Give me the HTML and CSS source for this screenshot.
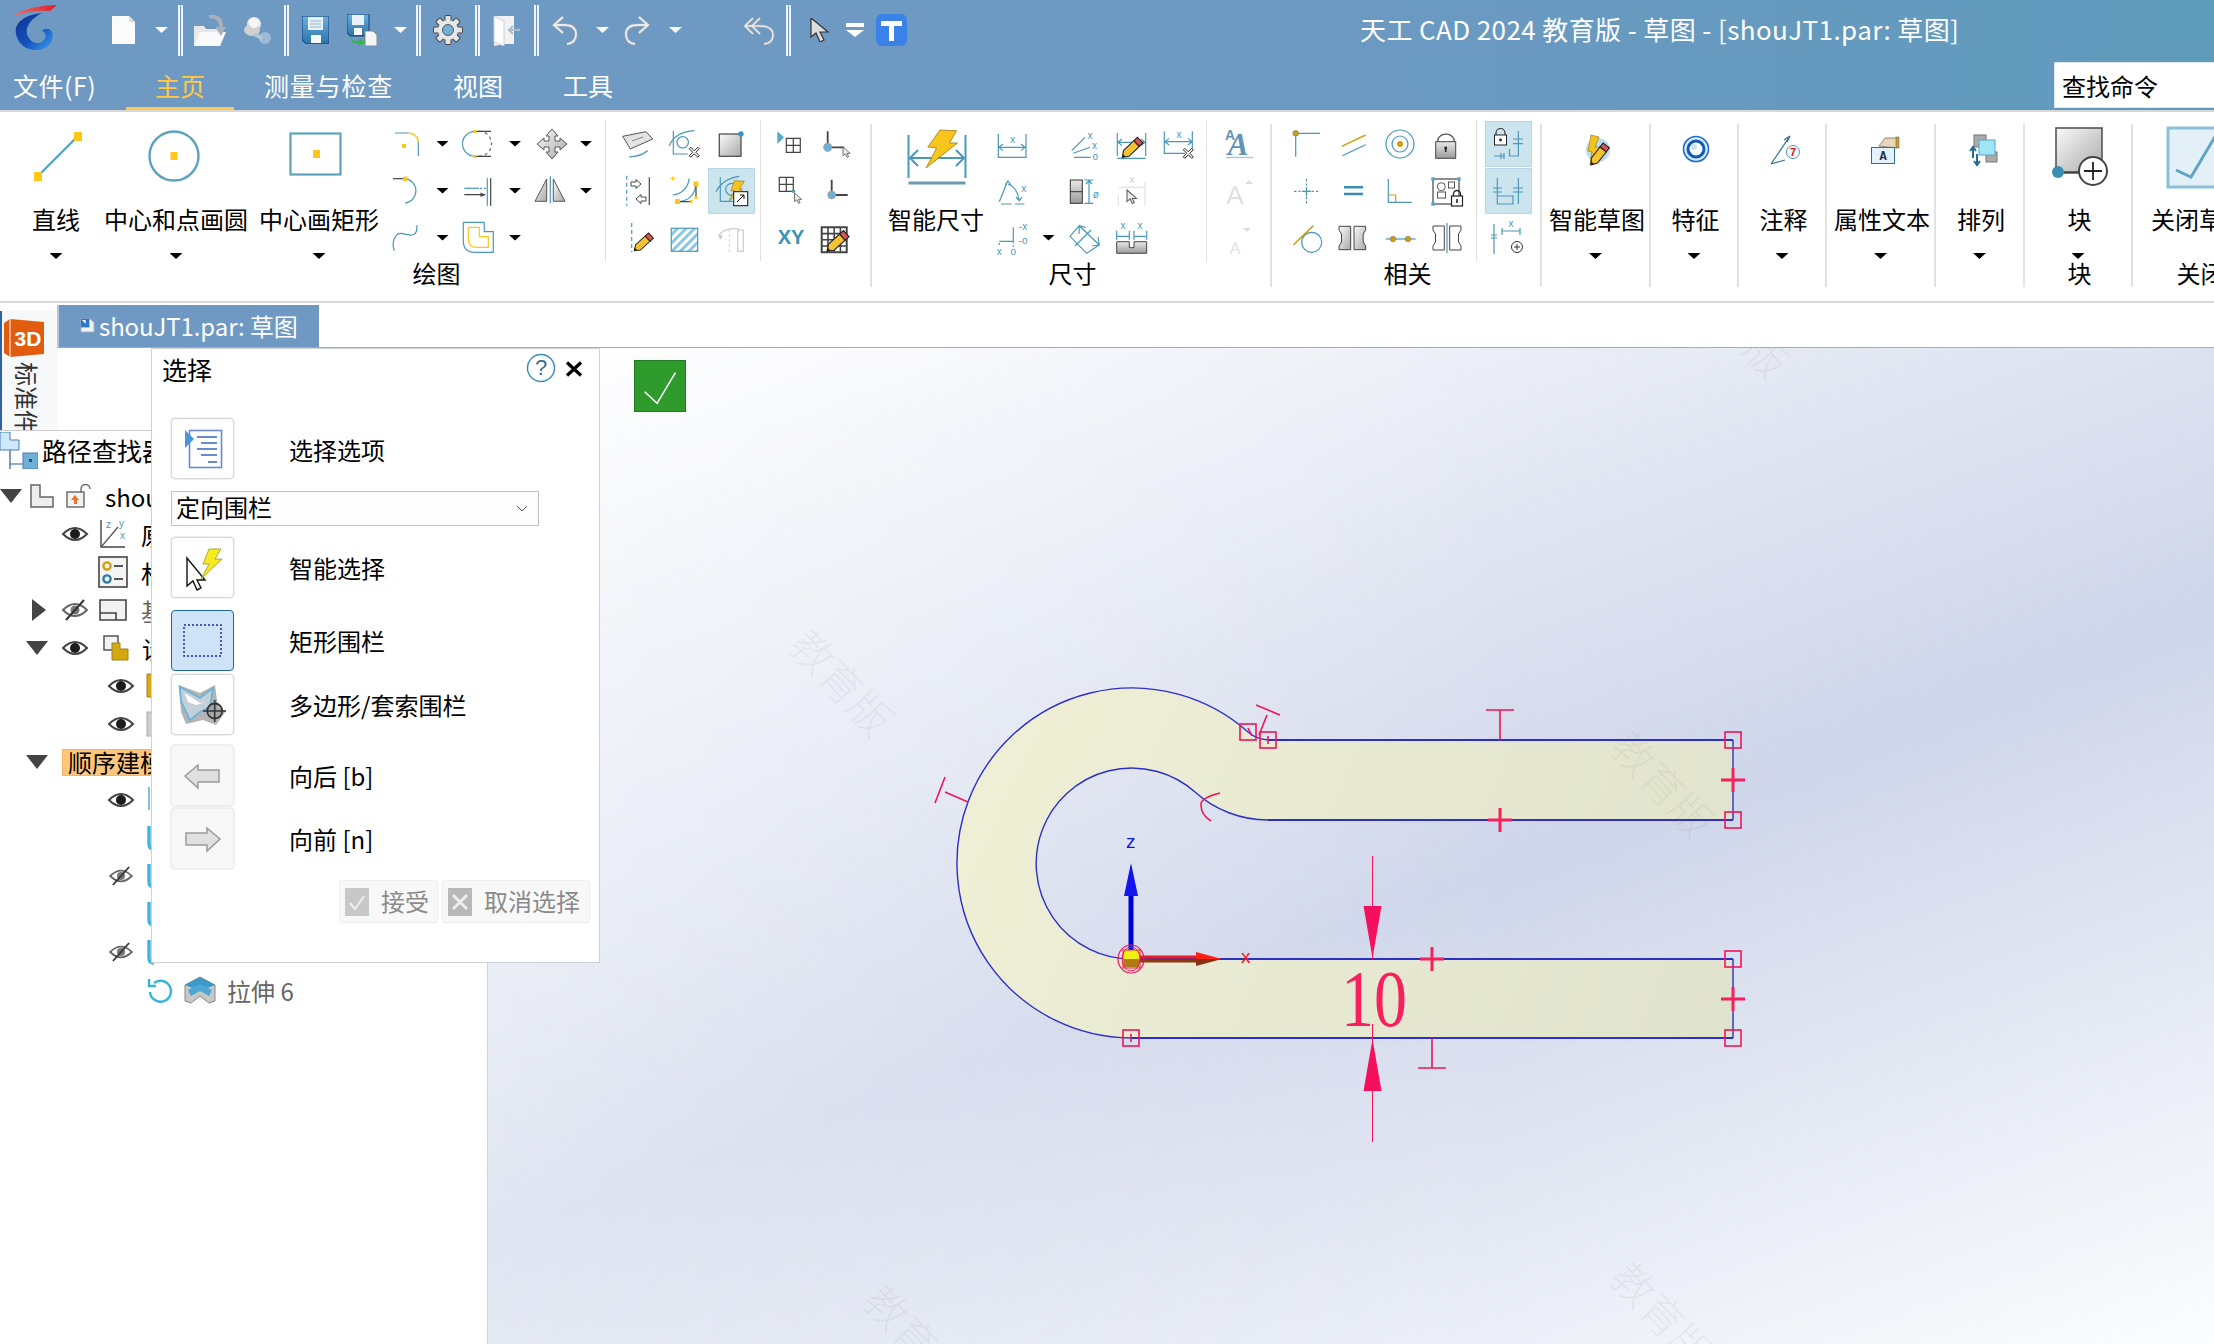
FILE: index.html
```html
<!DOCTYPE html>
<html lang="zh-CN">
<head>
<meta charset="utf-8">
<title>天工 CAD 2024 教育版 - 草图</title>
<link rel="stylesheet" href="styles.css">
</head>
<body>
<svg class="defs" width="0" height="0" aria-hidden="true">
<defs>
<linearGradient id="gy" x1="0" y1="0" x2="1" y2="1"><stop offset="0" stop-color="#fafafa"/><stop offset="1" stop-color="#a9a9a9"/></linearGradient>
<linearGradient id="gyv" x1="0" y1="0" x2="0" y2="1"><stop offset="0" stop-color="#e8e8e8"/><stop offset="1" stop-color="#9b9b9b"/></linearGradient>
<linearGradient id="redsw" x1="0" y1="0" x2="1" y2="0"><stop offset="0" stop-color="#f07070"/><stop offset="1" stop-color="#d81f26"/></linearGradient>
<linearGradient id="bluesw" x1="0" y1="0" x2="1" y2="1"><stop offset="0" stop-color="#0e2f8f"/><stop offset=".55" stop-color="#1550bd"/><stop offset="1" stop-color="#3aa0ee"/></linearGradient>
<linearGradient id="floppy" x1="0" y1="0" x2="0" y2="1"><stop offset="0" stop-color="#6cb0dc"/><stop offset="1" stop-color="#2c73a8"/></linearGradient>
<linearGradient id="sh" gradientUnits="userSpaceOnUse" x1="950" y1="690" x2="1740" y2="1040"><stop offset="0" stop-color="#f0f0d6"/><stop offset="1" stop-color="#dfe2cd"/></linearGradient>
<pattern id="hatch" width="6" height="6" patternUnits="userSpaceOnUse" patternTransform="rotate(45)"><rect width="6" height="6" fill="#fff"/><rect width="3" height="6" fill="#8cc8e4"/></pattern>
<g id="pencil"><polygon points="0,0 5,-3.6 18,-3.6 18,3.6 5,3.6" fill="#f4c430" stroke="#222" stroke-width="1"/><rect x="18" y="-3.6" width="4.5" height="7.2" fill="#e05050" stroke="#222" stroke-width="1"/><polygon points="0,0 2.5,-1.8 2.5,1.8" fill="#222"/></g>
<path id="cur" d="M0 0V11L3 8.5L5 13L7 12L5 8H9Z" fill="#eee" stroke="#555" stroke-width="1"/>
<path id="xm" d="M-5-3.5L-3.5-5L0-1.5L3.5-5L5-3.5L1.5 0L5 3.5L3.5 5L0 1.5L-3.5 5L-5 3.5L-1.5 0Z" fill="#fff" stroke="#222" stroke-width="1"/>
<g id="eye"><path d="M1 9Q13-3 25 9Q13 21 1 9Z" fill="#fff" stroke="#444" stroke-width="2"/><circle cx="13" cy="9" r="5" fill="#1c1c1c"/></g>
<g id="eyeoff"><path d="M1 9Q13-3 25 9Q13 21 1 9Z" fill="#fff" stroke="#666" stroke-width="2"/><circle cx="13" cy="9" r="4.5" fill="#777"/><path d="M22-1L4 19" stroke="#333" stroke-width="2"/></g>
<g id="cyan"><path d="M3 1V19Q3 24 8 24" fill="none" stroke="#3fb4dc" stroke-width="3.4"/></g>
<g id="cyanthin"><path d="M3 0V23" fill="none" stroke="#7fc4de" stroke-width="2"/></g>
</defs>
</svg>

<div class="app">
  <header class="titlebar">
    <div class="qat">
      <svg class="q q-logo" viewBox="0 0 47 47"><path d="M2 12Q20 1 47 1L40 7Q20 6 5 12Z" fill="url(#redsw)"/><path d="M32 9C14 11 4 19 6 30C8 41 18 47 28 46C38 45 45 37 42 28C40 24 35 24 32 27C36 28 37 33 34 36C30 41 22 40 19 34C14 27 17 17 32 9Z" fill="url(#bluesw)"/></svg>
      <svg class="q q-new" viewBox="0 0 23 28"><path d="M0 0H17L23 6V28H0Z" fill="#fbfbfb"/><path d="M17 0V6H23Z" fill="#ddd"/></svg>
      <span class="dd w q-dd1"></span>
      <span class="qsep q-s1"></span>
      <svg class="q q-open" viewBox="0 0 32 31"><path d="M0 11H10L12 14H26V30H0Z" fill="#e8e8e8"/><path d="M6 17H32L26 31H0Z" fill="#fafafa"/><path d="M15 1Q26 1 27 10V17" fill="none" stroke="#a8b0b8" stroke-width="4"/><path d="M21 12H32L27 21Z" fill="#a8b0b8"/></svg>
      <svg class="q q-pin" viewBox="0 0 30 29"><ellipse cx="12" cy="8" rx="7" ry="7" fill="#e6e6e6"/><ellipse cx="10" cy="14" rx="8" ry="6" fill="#d0d0d0"/><ellipse cx="12" cy="7" rx="5" ry="5" fill="#f6f6f6"/><circle cx="23" cy="22" r="6" fill="#9cb9d6"/><path d="M12 18L20 22" stroke="#b6c8da" stroke-width="4"/></svg>
      <span class="qsep q-s2"></span>
      <svg class="q q-save" viewBox="0 0 27 28"><path d="M0 0H27V28H4L0 24Z" fill="url(#floppy)" stroke="#123d80" stroke-width="1"/><rect x="6" y="1" width="15" height="13" fill="#e8f1f8"/><path d="M8 5H19M8 8H19M8 11H19" stroke="#8fb3cf" stroke-width="1"/><rect x="9" y="19" width="10" height="8" fill="#f4f8fb"/></svg>
      <svg class="q q-saveas" viewBox="0 0 30 32"><path d="M0 0H22V22H3L0 19Z" fill="url(#floppy)" stroke="#123d80" stroke-width="1"/><rect x="5" y="1" width="12" height="10" fill="#e8f1f8"/><rect x="7" y="14" width="8" height="7" fill="#f4f8fb"/><path d="M18 17H26L30 21V32H18Z" fill="#f5f5f5" stroke="#888" stroke-width="1"/><path d="M3 21Q4 28 12 27V24L19 28L12 32V30Q3 30 3 21Z" fill="#35b54a"/></svg>
      <span class="dd w q-dd2"></span>
      <span class="qsep q-s3"></span>
      <svg class="q q-gear" viewBox="0 0 30 30"><g fill="#e4e4e4" stroke="#444" stroke-width="1"><rect x="12" y="0.5" width="6" height="29" rx="1"/><rect x="12" y="0.5" width="6" height="29" rx="1" transform="rotate(45 15 15)"/><rect x="12" y="0.5" width="6" height="29" rx="1" transform="rotate(90 15 15)"/><rect x="12" y="0.5" width="6" height="29" rx="1" transform="rotate(135 15 15)"/></g><circle cx="15" cy="15" r="10" fill="#e8e8e8"/><circle cx="15" cy="15" r="5.5" fill="#72b0d4" stroke="#556" stroke-width="1"/></svg>
      <span class="qsep q-s4"></span>
      <svg class="q q-door" viewBox="0 0 28 32"><path d="M2 2H22V30H12L2 32Z" fill="#f2f2f2"/><path d="M2 2L12 7V32L2 28Z" fill="#fff" stroke="#ccd" stroke-width="1"/><path d="M28 16H17M21 12L17 16L21 20" fill="none" stroke="#a9bccd" stroke-width="2"/></svg>
      <span class="qsep q-s5"></span>
      <svg class="q q-undo" viewBox="0 0 26 29"><path d="M11 1L2 9L11 17M3 9H12Q24 9 24 18Q24 27 15 28" fill="none" stroke="#97a5b3" stroke-width="3.4"/><path d="M11 1L2 9L11 17M3 9H12Q24 9 24 18Q24 27 15 28" fill="none" stroke="#ececec" stroke-width="1.8"/></svg>
      <span class="dd w q-dd3"></span>
      <svg class="q q-redo" viewBox="0 0 26 29"><g transform="matrix(-1 0 0 1 26 0)"><path d="M11 1L2 9L11 17M3 9H12Q24 9 24 18Q24 27 15 28" fill="none" stroke="#97a5b3" stroke-width="3.4"/><path d="M11 1L2 9L11 17M3 9H12Q24 9 24 18Q24 27 15 28" fill="none" stroke="#ececec" stroke-width="1.8"/></g></svg>
      <span class="dd w q-dd4"></span>
      <svg class="q q-undoall" viewBox="0 0 32 30"><g fill="none"><path d="M10 3L2 11L10 19M2 11H16Q30 11 30 20Q30 28 21 29" stroke="#97a5b3" stroke-width="3"/><path d="M17 3L9 11L17 19" stroke="#97a5b3" stroke-width="3"/><path d="M10 3L2 11L10 19M2 11H16Q30 11 30 20Q30 28 21 29" stroke="#ececec" stroke-width="1.5"/><path d="M17 3L9 11L17 19" stroke="#ececec" stroke-width="1.5"/></g></svg>
      <span class="qsep q-s6"></span>
      <svg class="q q-cursor" viewBox="0 0 20 24"><path d="M1 0V19L6 15L10 24L14 22L10 14H18Z" fill="#ddd" stroke="#333" stroke-width="1.2"/></svg>
      <svg class="q q-ddbar" viewBox="0 0 18 14"><rect width="18" height="4" fill="#fff"/><path d="M0 7H18L9 14Z" fill="#fff"/></svg>
      <svg class="q q-t" viewBox="0 0 31 32"><rect width="31" height="32" rx="6" fill="#3b82e8"/><path d="M5 7H26V12H18V27H13V12H5Z" fill="#fff"/></svg>
      <div class="apptitle">天工 CAD 2024 教育版 - 草图 - [shouJT1.par: 草图]</div>
    </div>
    <nav class="tabs">
      <span class="tab t-file">文件(F)</span>
      <span class="tab t-home">主页</span>
      <span class="tab t-meas">测量与检查</span>
      <span class="tab t-view">视图</span>
      <span class="tab t-tool">工具</span>
      <div class="search">查找命令</div>
    </nav>
  </header>

  <section class="ribbon">
    <!-- 绘图 -->
    <div class="grp g-draw">
      <div class="body">
        <div class="big b-line">
          <svg class="bi" viewBox="0 0 100 85"><path d="M32 56L72 16" stroke="#5ba3c4" stroke-width="2.4"/><rect x="28" y="52" width="8" height="9" fill="#ffc61a"/><rect x="68" y="12" width="8" height="9" fill="#ffc61a"/></svg>
          <span class="lbl">直线</span><span class="dd"></span>
        </div>
        <div class="big b-circ">
          <svg class="bi" viewBox="0 0 100 85"><circle cx="48" cy="36" r="24.5" fill="none" stroke="#5ba3bd" stroke-width="2.4"/><rect x="44.5" y="32" width="7" height="8" fill="#ffc61a"/></svg>
          <span class="lbl">中心和点画圆</span><span class="dd"></span>
        </div>
        <div class="big b-rect">
          <svg class="bi" viewBox="0 0 100 85"><rect x="21.5" y="13.5" width="50" height="41" fill="none" stroke="#5ba3bd" stroke-width="2.2"/><rect x="44" y="30" width="7" height="8" fill="#ffc61a"/></svg>
          <span class="lbl">中心画矩形</span><span class="dd"></span>
        </div>
        <div class="sg sg-a">
          <svg class="si" viewBox="0 0 36 36"><path class="ln" d="M7 7H20.7M30.3 16.3V30"/><path d="M20.7 7A9.6 9.3 0 0 1 30.3 16.3" fill="none" stroke="#ffc61a" stroke-width="1.6"/><rect x="14" y="18" width="4" height="4" fill="#ffc61a"/></svg><span class="dd"></span>
          <svg class="si" viewBox="0 0 36 36"><path class="ln" d="M16 5.3A12.5 12.5 0 0 0 16 30.3"/><path d="M20 5.3A12.5 12.5 0 0 1 20 30.3" fill="none" stroke="#777" stroke-width="1.4" stroke-dasharray="3 3"/><path class="dk" d="M17 5.3H32M17 30.3H32"/><rect x="14.5" y="4" width="3" height="3" fill="#ffc61a"/><rect x="14.5" y="29" width="3" height="3" fill="#ffc61a"/></svg><span class="dd"></span>
          <svg class="si" viewBox="0 0 36 36"><path d="M18 3L24 10H21V15H26V12L33 18L26 24V21H21V26H24L18 33L12 26H15V21H10V24L3 18L10 12V15H15V10H12Z" fill="url(#gy)" stroke="#555" stroke-width="1"/></svg><span class="dd"></span>

          <svg class="si" viewBox="0 0 36 36"><path class="dk" d="M5 5.7H16"/><path class="ln" d="M17 5.7A12 12.2 0 0 1 17 30"/><rect x="15" y="3.5" width="4.5" height="4.5" fill="#ffc61a"/></svg><span class="dd"></span>
          <svg class="si" viewBox="0 0 36 36"><path class="ln" d="M28.3 5.3V32.7"/><path class="dk" d="M31.7 5.3V32.7M5.3 21.7H26"/><path class="ln" d="M5.3 15.3H20" /><path class="ln" d="M21 15.3H27" stroke-dasharray="2 2"/><path d="M26.7 21.7L21.5 19.5V24Z" fill="#444"/></svg><span class="dd"></span>
          <svg class="si" viewBox="0 0 36 36"><path d="M12.7 6L1 28.3H12.7Z" fill="url(#gy)" stroke="#555" stroke-width="1"/><path d="M19.3 6L31 28.3H19.3Z" fill="url(#gy)" stroke="#555" stroke-width="1"/><path class="ln" d="M16.3 3.3V30"/></svg><span class="dd"></span>

          <svg class="si" viewBox="0 0 36 36"><path class="ln" d="M6.3 30.7C3 22 7.3 12 14.7 13.7C23 16 29.7 17 29 5"/></svg><span class="dd"></span>
          <svg class="si" viewBox="0 0 36 36"><path class="ln" d="M4.3 2.3H25.3V11.7H34.3V32.3H16Q4.3 32.3 4.3 20.7Z"/><path d="M9.3 7.3H20.3V16.7H29.3V27.3H17.7Q9.3 27.3 9.3 19Z" fill="none" stroke="#ffc61a" stroke-width="1.2"/></svg><span class="dd"></span>
        </div>
        <div class="sg sg-b">
          <svg class="si" viewBox="0 0 36 36"><path d="M2.7 10.3L26 5.7L32.7 13L10.3 23Z" fill="#e3e3e3" stroke="#555" stroke-width="1"/><path d="M12 15L23 11" stroke="#888" stroke-width="1"/><path d="M9.3 30.7Q20 31 27.7 24.7" fill="none" stroke="#5ba3c4" stroke-width="1.6"/></svg>
          <svg class="si" viewBox="0 0 36 36"><path class="ln" d="M6.3 4.7V28H20.7M2.3 19.7Q8 6 27.3 4.7"/><circle class="ln" cx="15.7" cy="16.3" r="5.7"/><use href="#xm" transform="translate(27.3 26.3)"/></svg>
          <svg class="si" viewBox="0 0 36 36"><rect x="5.3" y="8" width="21.7" height="22.3" fill="url(#gy)" stroke="#444" stroke-width="1.2"/><circle cx="27" cy="8" r="2.7" fill="#3a93c4"/></svg>

          <svg class="si" viewBox="0 0 36 36"><path class="ln" d="M6.7 2.7V32.7" stroke-dasharray="4 3"/><path class="dk" d="M29.3 4.3V32"/><path d="M11 9H16V6.5L21 11L16 15.5V13H11Z" fill="#fff" stroke="#444" stroke-width="1"/><path d="M26 24H21V21.5L16 26L21 30.5V28H26Z" fill="#fff" stroke="#444" stroke-width="1"/></svg>
          <svg class="si" viewBox="0 0 36 36"><path d="M3.5 5.5H8M5.7 3.3V7.7" stroke="#ffc61a" stroke-width="1"/><path class="ln" d="M5.7 22Q20 20 22.3 5.3M10.7 28.7Q27 28 29 11"/><path class="dk" d="M10.7 28.7H24.5M29 11V24"/><rect x="8" y="26" width="5" height="5" fill="#ffc61a"/><rect x="26.5" y="8.5" width="5" height="5" fill="#ffc61a"/><rect x="22.5" y="27" width="3" height="3" fill="#ffc61a"/><rect x="27.5" y="23" width="3" height="3" fill="#ffc61a"/></svg>
          <div class="act"><svg class="si" viewBox="0 0 36 36"><path class="ln" d="M6.3 4.3V28.3H18.7M2 18.7Q8 6 25.3 3.3"/><circle class="ln" cx="17.7" cy="16.3" r="6"/><polygon points="20.3,7.7 30.3,8.3 25.3,16 28.7,16 15.3,27.7 20.3,17.7 17,17.7" fill="#f6c21c" stroke="#8a6d00" stroke-width=".6"/><rect x="19.7" y="18.7" width="14" height="14" fill="#fff" stroke="#111" stroke-width="1"/><path d="M23 29L30 22M26 22H30V26" fill="none" stroke="#111" stroke-width="1"/></svg></div>

          <svg class="si" viewBox="0 0 36 36"><path class="ln" d="M11.7 3V32.3" stroke-dasharray="4 3"/><use href="#pencil" transform="translate(14.3 30.7) rotate(-42)"/></svg>
          <svg class="si" viewBox="0 0 36 36"><rect x="4.3" y="8.3" width="26.4" height="23" fill="url(#hatch)" stroke="#4b97b8" stroke-width="1.2"/></svg>
          <svg class="si" viewBox="0 0 36 36"><path d="M15.3 9V33" stroke="#ddd" stroke-width="1.2" stroke-dasharray="3 2"/><rect x="23.7" y="10" width="5.6" height="21.3" fill="none" stroke="#ccc" stroke-width="1.2"/><path d="M4.7 15.7Q10 7 25.3 9" fill="none" stroke="#ccc" stroke-width="1.2"/><path d="M4 14L9 16L6 20Z" fill="#ccc"/></svg>
        </div>
        <div class="sg sg-c">
          <svg class="si" viewBox="0 0 36 36"><path d="M6.3 5.3V18L13 11.3Z" fill="#58a6c8"/><path class="dk" d="M15.3 12.3H29.3V26.3H15.3ZM22.3 12.3V26.3M15.3 19.3H29.3"/></svg>
          <svg class="si" viewBox="0 0 36 36"><path d="M9.7 5.3V21.3H26.3" fill="none" stroke="#444" stroke-width="1.8"/><circle cx="9.7" cy="21.3" r="4.2" fill="#6cb0d6" stroke="#b98" stroke-width=".6"/><use href="#cur" transform="translate(25 21) scale(.8)"/></svg>

          <svg class="si" viewBox="0 0 36 36"><path class="dk" d="M8.3 4.3H22.3V18.3H8.3ZM15.3 4.3V18.3M8.3 11.3H22.3"/><circle cx="22.3" cy="18.3" r="1.8" fill="#4b97b8"/><use href="#cur" transform="translate(23.5 20) scale(.8)"/></svg>
          <svg class="si" viewBox="0 0 36 36"><path d="M13.7 6.7V22H29.7" fill="none" stroke="#444" stroke-width="1.8"/><circle cx="13.7" cy="22" r="4" fill="#6cb0d6" stroke="#b98" stroke-width=".6"/></svg>

          <svg class="si" viewBox="0 0 36 36"><text class="xy" x="20" y="24" text-anchor="middle">XY</text></svg>
          <svg class="si" viewBox="0 0 36 36"><path d="M3.7 7.3H28.7V32.3H3.7Z" fill="#fff" stroke="#444" stroke-width="2"/><path d="M10 7.3V32.3M16.2 7.3V32.3M22.4 7.3V32.3M3.7 13.6H28.7M3.7 19.8H28.7M3.7 26H28.7" stroke="#444" stroke-width="1.6"/><use href="#pencil" transform="translate(9 31) rotate(-42) scale(1.15)"/></svg>
        </div>
      </div>
      <div class="glabel">绘图</div>
    </div>

    <!-- 尺寸 -->
    <div class="grp g-dim">
      <div class="body">
        <div class="big b-smart">
          <svg class="bi" viewBox="0 0 100 85"><path d="M22.5 15V58M79.5 15V58" stroke="#4b97b8" stroke-width="2"/><path d="M22.5 63H79.5" stroke="#6d9cb0" stroke-width="3"/><path d="M24 38H78M32 30L24 38L32 46M70 30L78 38L70 46" fill="none" stroke="#4b97b8" stroke-width="2"/><polygon points="54,10 70.6,10.7 63.5,23 71.5,23 40,48 50.6,28 41.8,27" fill="#f8c51c" stroke="#9a7a10" stroke-width=".8"/></svg>
          <span class="lbl">智能尺寸</span>
        </div>
        <div class="sg sg-d">
          <svg class="si" viewBox="0 0 36 36"><path class="ln" d="M4.3 8V31.3H32V8M5 21.3H31M9 18L5 21.3L9 24.6M27 18L31 21.3L27 24.6"/><text class="lb" x="18.7" y="17" text-anchor="middle">x</text></svg><span></span>
          <svg class="si" viewBox="0 0 36 36"><path class="ln" d="M4.7 24.7L18 11.3M6.3 27.3L23 21.3M7 31.3H23.7"/><text class="lb" x="23" y="13" text-anchor="middle">x</text><text class="lb" x="27.5" y="23" text-anchor="middle">x</text><text class="lb" x="28.3" y="34" text-anchor="middle">o</text></svg>
          <svg class="si" viewBox="0 0 36 36"><path class="ln" d="M3.3 7V30M31.7 7V30M3.3 32.3H31.7M4 16.3H31M8 13L4 16.3L8 19.6M27 13L31 16.3L27 19.6"/><use href="#pencil" transform="translate(8.3 31.3) rotate(-44) scale(1.1)"/></svg>
          <svg class="si" viewBox="0 0 36 36"><path class="ln" d="M3.3 5.3V27.3H24M31.3 5.3V25M4 15.7H31M8 12.4L4 15.7L8 19M27 12.4L31 15.7L27 19"/><text class="lb" x="18" y="12" text-anchor="middle">x</text><use href="#xm" transform="translate(27.3 27.3)"/></svg>

          <svg class="si" viewBox="0 0 36 36"><path class="ln" d="M5.3 28.7L13.7 7.7M7 31H17.7M21 31H30.3M14 11Q23 14 25.3 27.7M22 24L25.3 27.7L28 24M11 12L14 8L17 12"/><text class="lb" x="29.7" y="18.5" text-anchor="middle">x</text></svg><span></span>
          <svg class="si" viewBox="0 0 36 36"><rect x="3.3" y="7" width="12" height="23.3" fill="url(#gyv)" stroke="#333" stroke-width="1"/><path d="M3.3 18.7H15.3" stroke="#333"/><path class="ln" d="M22 7.5V30M17.3 7H26.3M17.3 30.3H26.3M19 11L22 7.5L25 11"/><text class="lb" x="28.7" y="24.5" text-anchor="middle">ø</text></svg>
          <svg class="si dis" viewBox="0 0 36 36"><path d="M4.3 22V32.7M31 9.3V32.7M5 14.3H30" fill="none" stroke="#ddd" stroke-width="1"/><text class="lb lbg" x="18" y="10" text-anchor="middle">x</text><use href="#cur" transform="translate(13 17) scale(1.05)"/></svg>
          <span></span>

          <svg class="si" viewBox="0 0 36 36"><path class="ln" d="M5.3 21.3H19.3M19.3 7.3V21.3"/><path class="ln" d="M19.3 21.3V27M5.3 23V26" stroke-dasharray="2 2"/><text class="lb" x="29" y="10" text-anchor="middle">-x</text><text class="lb" x="29" y="24" text-anchor="middle">-o</text><text class="lb" x="5.3" y="35" text-anchor="middle">x</text><text class="lb" x="19.3" y="35" text-anchor="middle">o</text></svg><span class="dd"></span>
          <svg class="si" viewBox="0 0 36 36"><path class="ln" d="M3 16.3L12.3 5.7L32.3 25L19.7 33.3ZM12.3 5.7L12 14M12.3 5.7L19 7.5M32.3 25L31 17M32.3 25L25 26M8 26L24 10"/></svg>
          <svg class="si" viewBox="0 0 36 36"><path d="M2.7 21.7H15.3V27.7H20V21.7H32.7V33.3H2.7Z" fill="url(#gyv)" stroke="#444" stroke-width="1"/><path class="ln" d="M2.7 10.7V19.7M15.3 10.7V19.7M20 10.7V19.7M32.7 10.7V19.7M3 16.3H15M20 16.3H32"/><text class="lb" x="9" y="9" text-anchor="middle">x</text><text class="lb" x="26" y="9" text-anchor="middle">x</text></svg>
          <span></span>
        </div>
        <div class="sg sg-e">
          <svg class="si" viewBox="0 0 36 36"><text class="ta1" x="5" y="14">A</text><text class="ta2" x="18" y="29" text-anchor="middle">A</text><path d="M6 31.5H33" stroke="#a9c4d6" stroke-width="1.4"/></svg>
          <svg class="si" viewBox="0 0 36 36"><text class="ta3" x="15" y="31" text-anchor="middle">A</text><path d="M25 11L29 7L33 11Z" fill="#ddd"/></svg>
          <svg class="si" viewBox="0 0 36 36"><text class="ta4" x="15" y="34" text-anchor="middle">A</text><path d="M23 8H31L27 12Z" fill="#ddd"/></svg>
        </div>
      </div>
      <div class="glabel">尺寸</div>
    </div>

    <!-- 相关 -->
    <div class="grp g-rel">
      <div class="body">
        <div class="sg sg-f">
          <svg class="si" viewBox="0 0 36 36"><path class="ln" d="M7.7 7.3V30.7M7.7 7.3H32"/><circle cx="7.7" cy="7.3" r="2.8" fill="#d0a010" stroke="#555" stroke-width=".5"/></svg>
          <svg class="si" viewBox="0 0 36 36"><path d="M6.7 20.3L30.7 9" stroke="#d0a010" stroke-width="1.4"/><path class="ln" d="M7.3 29.7L30.7 18.7"/></svg>
          <svg class="si" viewBox="0 0 36 36"><circle class="ln" cx="18" cy="18" r="14"/><circle class="ln" cx="18" cy="18" r="8"/><circle cx="18" cy="18" r="3" fill="#d0a010"/></svg>
          <svg class="si" viewBox="0 0 36 36"><path d="M9 15.7V13A9 9 0 0 1 25 13V15.7" fill="none" stroke="#555" stroke-width="1.4"/><rect x="6.7" y="15.7" width="20" height="16.6" fill="url(#gyv)" stroke="#444" stroke-width="1"/><path d="M16.7 22V26" stroke="#222" stroke-width="1.6"/><circle cx="16.7" cy="22" r="1.4" fill="#222"/></svg>

          <svg class="si" viewBox="0 0 36 36"><path class="ln" d="M6 18.3H31M18.5 6V31" stroke-dasharray="2.4 2"/><path class="ln" d="M14 18.3H23M18.5 14V23"/></svg>
          <svg class="si" viewBox="0 0 36 36"><path d="M9 14.3H28M9 21H28" stroke="#3a8fb0" stroke-width="2.6"/></svg>
          <svg class="si" viewBox="0 0 36 36"><path class="ln" d="M6.3 6V29.3H29.7"/><path d="M6.3 22H13.7V29.3" fill="none" stroke="#c8a020" stroke-width="1.2"/></svg>
          <svg class="si" viewBox="0 0 36 36"><rect x="4" y="6" width="26" height="25" fill="#fff" stroke="#444" stroke-width="1.2"/><rect x="2.3" y="4.3" width="3.4" height="3.4" fill="#5ba3c4"/><rect x="28.3" y="4.3" width="3.4" height="3.4" fill="#5ba3c4"/><rect x="2.3" y="29.3" width="3.4" height="3.4" fill="#5ba3c4"/><circle cx="12.3" cy="13.7" r="4" fill="none" stroke="#555"/><rect x="19.5" y="9" width="6" height="6" fill="none" stroke="#555"/><rect x="8.5" y="19" width="8" height="6" fill="none" stroke="#555"/><path d="M24.5 23V21A3.5 3.5 0 0 1 31.5 21V23" fill="none" stroke="#222" stroke-width="1.3"/><rect x="22.5" y="23" width="11" height="10" fill="#fff" stroke="#222" stroke-width="1.2"/><path d="M28 26V30" stroke="#222" stroke-width="1.6"/></svg>

          <svg class="si" viewBox="0 0 36 36"><circle class="ln" cx="23.7" cy="22.3" r="10"/><path d="M5.3 25L25.3 5.7" stroke="#d0a010" stroke-width="1.6"/></svg>
          <svg class="si" viewBox="0 0 36 36"><path d="M4 6.3H15.7V29.7H4V26L6.5 22V14L4 10Z" fill="url(#gy)" stroke="#444" stroke-width="1"/><path d="M30.7 6.3H19V29.7H30.7V26L28.2 22V14L30.7 10Z" fill="url(#gy)" stroke="#444" stroke-width="1"/></svg>
          <svg class="si" viewBox="0 0 36 36"><path class="ln" d="M3.7 19H33.7"/><circle cx="11" cy="19" r="2.8" fill="#d0a010" stroke="#666" stroke-width=".5"/><circle cx="26" cy="19" r="2.8" fill="#d0a010" stroke="#666" stroke-width=".5"/></svg>
          <svg class="si" viewBox="0 0 36 36"><path d="M4 6H15.3V30H4V26L6.5 22V14L4 10Z" fill="#fff" stroke="#444" stroke-width="1"/><path d="M32 6H20.7V30H32V26L29.5 22V14L32 10Z" fill="#fff" stroke="#444" stroke-width="1"/><path class="ln" d="M18 3V33"/></svg>
        </div>
        <div class="sg sg-g">
          <div class="act top"><svg class="si" viewBox="0 0 36 36"><path d="M5 9V7A4.5 4.5 0 0 1 14 7V9" fill="none" stroke="#333" stroke-width="1.2"/><rect x="3.5" y="9" width="12" height="10" fill="#fff" stroke="#222" stroke-width="1"/><circle cx="9.5" cy="14" r="1.4" fill="#222"/><path class="ln" d="M27.4 5V30H18.5V23M3 30H13M10 27V33M13 27V33M22 13H32M22 17.7H32"/></svg></div>
          <div class="act"><svg class="si" viewBox="0 0 36 36"><path class="ln" d="M6.3 5V31H22V23H6.3M27.4 5V31M2 15H11M2 19H11M22 15H32M22 19H32"/></svg></div>
          <svg class="si" viewBox="0 0 36 36"><path class="ln" d="M3 4V34M0 15H6M0 18H6M11 11H29M11 8V15M29 8V15"/><text class="lb" x="20" y="7" text-anchor="middle">x</text><circle cx="26" cy="27" r="5.5" fill="#fff" stroke="#333"/><path d="M23 27H29M26 24V30" stroke="#333"/></svg>
        </div>
      </div>
      <div class="glabel">相关</div>
    </div>

    <div class="grp g-w109">
      <div class="body"><div class="big b-full">
        <svg class="bi" viewBox="0 0 100 85"><circle cx="52" cy="30" r="12" fill="#bcdcf0"/><polygon points="45,15 53,17 49,27 54,27 44,45 46,32 42,31" fill="#f6c21c" stroke="#8a6d00" stroke-width=".6"/><use href="#pencil" transform="translate(45 45) rotate(-52) scale(1.1)"/></svg>
        <span class="lbl">智能草图</span><span class="dd"></span></div></div>
      <div class="glabel"></div>
    </div>
    <div class="grp g-w88">
      <div class="body"><div class="big b-full">
        <svg class="bi" viewBox="0 0 100 85"><circle cx="52" cy="29" r="12.5" fill="#dbe9f8" stroke="#1a6fd6" stroke-width="1.6"/><circle cx="52" cy="29" r="8" fill="#fff" stroke="#0f5bbd" stroke-width="3"/><circle cx="50" cy="27" r="3" fill="#cfe2f5"/></svg>
        <span class="lbl">特征</span><span class="dd"></span></div></div>
      <div class="glabel"></div>
    </div>
    <div class="grp g-w88">
      <div class="body"><div class="big b-full">
        <svg class="bi" viewBox="0 0 100 85"><g transform="translate(3 0)"><path d="M36 44L55 16M36 44L50 40M55 16L52 22M55 16L49 20" fill="none" stroke="#2f6f8f" stroke-width="1.2"/><circle cx="58" cy="32" r="6.5" fill="#f4f8fb" stroke="#4b97b8"/><text class="seven" x="58" y="36" text-anchor="middle">7</text></g></svg>
        <span class="lbl">注释</span><span class="dd"></span></div></div>
      <div class="glabel"></div>
    </div>
    <div class="grp g-w109">
      <div class="body"><div class="big b-full">
        <svg class="bi" viewBox="0 0 100 85"><g transform="translate(4 0)"><path d="M44 26L50 18H62V28Z" fill="#e9d6bb" stroke="#777" stroke-width=".8"/><rect x="61" y="17" width="3" height="11" fill="#c9a227" stroke="#555" stroke-width=".5"/><rect x="36.5" y="27.5" width="23" height="16" fill="#e4f1fa" stroke="#2f6f8f"/><text class="aa" x="48" y="40" text-anchor="middle">A</text></g></svg>
        <span class="lbl">属性文本</span><span class="dd"></span></div></div>
      <div class="glabel"></div>
    </div>
    <div class="grp g-w89">
      <div class="body"><div class="big b-full">
        <svg class="bi" viewBox="0 0 100 85"><g transform="translate(3 0)"><rect x="41" y="15" width="12" height="12" fill="#aaa" stroke="#777"/><rect x="53" y="32" width="11" height="10" fill="#aaa" stroke="#777"/><rect x="46" y="20" width="16" height="15" fill="#9fe6f5" stroke="#58a6c8"/><path d="M40 28V38M37 31L40 27L43 31" fill="none" stroke="#1e6f8f" stroke-width="2"/><path d="M44 34V44M41 41L44 45L47 41" fill="none" stroke="#1e6f8f" stroke-width="2"/></g></svg>
        <span class="lbl">排列</span><span class="dd"></span></div></div>
      <div class="glabel"></div>
    </div>
    <div class="grp g-w108">
      <div class="body"><div class="big b-full">
        <svg class="bi" viewBox="0 0 100 85"><rect x="28" y="8" width="46" height="45" fill="url(#gy)" stroke="#555" stroke-width="1.6"/><circle cx="30" cy="52" r="6" fill="#3a8fb0"/><path d="M36 52H51" stroke="#333" stroke-width="1.4"/><circle cx="65" cy="51" r="14" fill="#fff" stroke="#444" stroke-width="2"/><path d="M56 51H74M65 42V60" stroke="#222" stroke-width="1.8"/></svg>
        <span class="lbl">块</span><span class="dd"></span></div></div>
      <div class="glabel">块</div>
    </div>
    <div class="grp g-close">
      <div class="body"><div class="big b-full">
        <svg class="bi" viewBox="0 0 100 85"><rect x="19" y="8" width="81" height="59" fill="#e3f0f7" stroke="#8cc0d8" stroke-width="3"/><path d="M27 50L42 57L70 10" fill="none" stroke="#5fa5c8" stroke-width="3"/></svg>
        <span class="lbl lbl-close">关闭草图</span></div></div>
      <div class="glabel">关闭</div>
    </div>
  </section>

  <main class="work">
    <aside class="strip">
      <svg class="logo3d" viewBox="0 0 40 40"><path d="M0 5L6 1L40 4V36L6 39L0 35Z" fill="#e25c10"/><path d="M6 1V39" stroke="#f7c9a8" stroke-width="1.5"/><text class="t3d" x="24" y="28" text-anchor="middle">3D</text></svg>
      <div class="vtext">标准件</div>
    </aside>
    <div class="tabbar">
      <div class="doctab">
        <svg class="docic" viewBox="0 0 16 16"><path d="M1 1H11L15 5V15H1Z" fill="#eef3f8" stroke="#9ab"/><rect x="1" y="1" width="9" height="9" fill="#2a78c8"/><path d="M2 2H6V6Z" fill="#fff"/></svg>
        <span>shouJT1.par: 草图</span>
      </div>
    </div>
    <div class="blank"></div>

    <div class="canvas">
      <svg class="draw" viewBox="488 348 1726 996">
        <path d="M1131 1038A175 175 0 1 1 1248 732Q1256 739 1268 740H1733V820H1268A109 109 0 0 1 1195 792A95.5 95.5 0 1 0 1131 959H1733V1038Z" fill="url(#sh)"/>
        <g class="wm">
          <text transform="translate(787 647) rotate(47)">教育版</text>
          <text transform="translate(1608 749) rotate(47)">教育版</text>
          <text transform="translate(861 1303) rotate(47)">教育版</text>
          <text transform="translate(1608 1280) rotate(47)">教育版</text>
          <text transform="translate(1683 290) rotate(47)">教育版</text>
        </g>
        <path d="M1131 1038A175 175 0 1 1 1248 732Q1256 739 1268 740M1268 820A109 109 0 0 1 1195 792A95.5 95.5 0 1 0 1131 959M1733 740V820M1733 959V1038" fill="none" stroke="#2c2fc8" stroke-width="1.4"/>
        <path d="M1268 740H1733M1268 820H1733M1131 959H1733M1131 1038H1733" fill="none" stroke="#2c2fc8" stroke-width="2"/>
        <g class="mk">
          <rect x="1725" y="732" width="16" height="16"/><rect x="1725" y="812" width="16" height="16"/><rect x="1725" y="951" width="16" height="16"/><rect x="1725" y="1030" width="16" height="16"/><rect x="1123" y="1030" width="16" height="16"/><rect x="1260" y="732" width="16" height="16"/><rect x="1240" y="724" width="16" height="16"/>
          <path d="M1131 1034V1042M1268 736V744M1248 728L1252 736"/>
          <path d="M1486 710H1514M1500 710V740M1418 1068H1446M1432 1038V1068M968 802L945 792M945 777L935 803M1259 735L1267 715M1256 705L1280 715M1220 793Q1200 798 1201 805Q1201 815 1211 821"/>
        </g>
        <path class="pl" d="M1721 780H1745M1733 768V792M1488 820H1512M1500 808V832M1420 959H1444M1432 947V971M1721 999H1745M1733 987V1011"/>
        <path d="M1372.5 856V959M1372.5 1024V1142" stroke="#f0145a" stroke-width="1"/>
        <path d="M1363.5 906H1381.5L1372.5 958ZM1363.5 1091H1381.5L1372.5 1039Z" fill="#f60f5c"/>
        <text class="ten" x="1341" y="1026" textLength="66" lengthAdjust="spacingAndGlyphs">10</text>
        <path d="M1131 955V895" stroke="#0000d8" stroke-width="5"/><path d="M1131 863L1124 896H1138Z" fill="#1414f0"/>
        <text class="ax az" x="1126" y="848">z</text>
        <path d="M1131 957H1200" stroke="#f01818" stroke-width="3"/><path d="M1131 961H1200" stroke="#8a3a10" stroke-width="3"/>
        <path d="M1196 952L1222 959H1196Z" fill="#ff2010"/><path d="M1196 966L1222 959H1196Z" fill="#8a3010"/>
        <text class="ax ay" x="1241" y="963">x</text>
        <rect x="1123" y="950" width="17" height="18" fill="#f2f010" stroke="#e8204a"/>
        <rect x="1124" y="959" width="15" height="8" fill="#b07818"/>
        <ellipse cx="1131" cy="959" rx="13" ry="14" fill="none" stroke="#f0145a" stroke-width="1.2"/>
        <ellipse cx="1131" cy="959" rx="9" ry="12" fill="none" stroke="#f0145a" stroke-width="1"/>
      </svg>
      <button class="okbtn" aria-label="确定"><svg viewBox="0 0 52 52"><path d="M10 32L23 44L42 12" fill="none" stroke="#fff" stroke-width="1.6"/></svg></button>
    </div>

    <aside class="tree">
      <div class="treehead">
        <svg class="thic" viewBox="0 0 38 37"><path d="M0 0H10V8H19V18H0Z" fill="#cfe8fb" stroke="#4a7fb5"/><path d="M10 18V38M10 32H24" stroke="#2c5f95" stroke-width="1.2"/><rect x="23" y="21" width="15" height="16" fill="#6fb0d6" stroke="#4a7fb5"/><rect x="29" y="27" width="3" height="3" fill="#1d4f8f"/></svg>
        <span>路径查找器</span>
      </div>
      <div class="tr">
        <span class="tri dn t0"></span>
        <svg class="tic tic1" viewBox="0 0 24 24"><path d="M1 1H10V13H23V23H1Z" fill="#ededed" stroke="#666" stroke-width="1.5"/></svg>
        <svg class="tic tic2" viewBox="0 0 26 24"><rect x="1" y="8" width="17" height="15" fill="#f2f2f2" stroke="#666" stroke-width="1.4"/><path d="M9 11L5 16H8V20H11V16H13Z" fill="#e8742a"/><path d="M15 8V5A4.5 4.5 0 0 1 24 5" fill="none" stroke="#666" stroke-width="1.4"/></svg>
        <span class="txt t-shou">shouJT1</span>
      </div>
      <div class="tr lv1">
        <svg class="eye" viewBox="0 0 26 18"><use href="#eye"/></svg>
        <svg class="tic tic3" viewBox="0 0 30 32"><path d="M3 2V29H27" fill="none" stroke="#444" stroke-width="1.4"/><path d="M4 28L20 9" stroke="#555" stroke-width="1.2"/><text class="lb" x="8" y="10">z</text><text class="lb" x="21" y="9">y</text><text class="lb" x="22" y="21">x</text></svg>
        <span class="txt">原点</span>
      </div>
      <div class="tr lv1">
        <span class="eye"></span>
        <svg class="tic tic3" viewBox="0 0 30 32"><rect x="1" y="1" width="28" height="30" fill="#f4f4f4" stroke="#444" stroke-width="1.6"/><circle cx="9" cy="10" r="3.6" fill="none" stroke="#d0a010" stroke-width="2.4"/><circle cx="9" cy="23" r="3.6" fill="none" stroke="#2f7fa8" stroke-width="2.4"/><path d="M16 10H25M16 23H25" stroke="#555" stroke-width="1.8"/></svg>
        <span class="txt">材料表</span>
      </div>
      <div class="tr lv1">
        <span class="tri rt"></span>
        <svg class="eye ob" viewBox="0 0 26 20"><use href="#eyeoff" y="1"/></svg>
        <svg class="tic tic3" viewBox="0 0 30 24"><path d="M2 2H28V22H2Z" fill="#f2f2f2" stroke="#444" stroke-width="1.6"/><path d="M2 15H18V22" fill="none" stroke="#444" stroke-width="1.6"/></svg>
        <span class="txt gr">基本参考平面</span>
      </div>
      <div class="tr lv1">
        <span class="tri dn t1"></span>
        <svg class="eye" viewBox="0 0 26 18"><use href="#eye"/></svg>
        <svg class="tic tic4" viewBox="0 0 26 26"><rect x="1" y="1" width="14" height="14" fill="#f2f2f2" stroke="#555" stroke-width="1.5"/><path d="M9 8H17V14H25V25H9Z" fill="#d5a810" stroke="#a08020"/></svg>
        <span class="txt">设计模型</span>
      </div>
      <div class="tr lv2">
        <svg class="eye" viewBox="0 0 26 18"><use href="#eye"/></svg>
        <svg class="tic tic5" viewBox="0 0 24 24"><path d="M1 0H8V8H23V23H1Z" fill="#d9aa14" stroke="#a08020"/></svg>
      </div>
      <div class="tr lv2">
        <svg class="eye" viewBox="0 0 26 18"><use href="#eye"/></svg>
        <svg class="tic tic5" viewBox="0 0 24 24"><rect x="1" y="0" width="22" height="24" fill="#cfcfcf" stroke="#aaa"/></svg>
      </div>
      <div class="tr lv1">
        <span class="tri dn t1"></span>
        <span class="hl">顺序建模</span>
      </div>
      <div class="tr lv2">
        <svg class="eye" viewBox="0 0 26 18"><use href="#eye"/></svg>
        <svg class="tic tic5" viewBox="0 0 24 26"><use href="#cyanthin"/></svg>
      </div>
      <div class="tr lv2">
        <span class="eye"></span>
        <svg class="tic tic5" viewBox="0 0 24 26"><use href="#cyan"/></svg>
      </div>
      <div class="tr lv2">
        <svg class="eye" viewBox="0 0 26 20"><use href="#eyeoff" y="1"/></svg>
        <svg class="tic tic5" viewBox="0 0 24 26"><use href="#cyan"/></svg>
      </div>
      <div class="tr lv2">
        <span class="eye"></span>
        <svg class="tic tic5" viewBox="0 0 24 26"><use href="#cyan"/></svg>
      </div>
      <div class="tr lv2">
        <svg class="eye" viewBox="0 0 26 20"><use href="#eyeoff" y="1"/></svg>
        <svg class="tic tic5" viewBox="0 0 24 26"><use href="#cyan"/></svg>
      </div>
      <div class="tr lv3">
        <svg class="tic tic6" viewBox="0 0 26 26"><path d="M7 6A10.5 10.5 0 1 1 3 15M2 2L2 9H9" fill="none" stroke="#33b5df" stroke-width="2.4"/></svg>
        <svg class="tic tic7" viewBox="0 0 32 28"><path d="M1 9L16 1L31 9V25L25 27L16 20L7 27L1 25Z" fill="#c8c8c8" stroke="#888"/><path d="M1 9L16 1L31 9L16 15Z" fill="#3d9ac8"/><path d="M16 8L28 14L25 20L16 15L7 20L4 14Z" fill="#4ea6d2"/></svg>
        <span class="txt gd">拉伸 6</span>
      </div>
    </aside>

    <section class="dialog">
      <div class="dhead">
        <span class="dtitle">选择</span>
        <svg class="qm" viewBox="0 0 30 30"><circle cx="15" cy="15" r="13.5" fill="#fff" stroke="#3a8fb0" stroke-width="1.4"/><text class="qmt" x="15" y="22" text-anchor="middle">?</text></svg>
        <svg class="cx" viewBox="0 0 18 16"><path d="M2 1.5L16 14.5M16 1.5L2 14.5" stroke="#000" stroke-width="3.2"/></svg>
      </div>
      <div class="trow r1">
        <div class="tbtn"><svg viewBox="0 0 61 59"><rect x="17.5" y="11.5" width="32" height="37" fill="#fff" stroke="#6a8ad0" stroke-width="1.6"/><path d="M13 11V29L22 20Z" fill="#4a96d8"/><path d="M25 18H45M29 24H45M25 30H45M29 36H45M36 43H45" stroke="#6a8ad0" stroke-width="2"/></svg></div>
        <span class="tl">选择选项</span>
      </div>
      <div class="combo"><span>定向围栏</span><svg class="chev" viewBox="0 0 12 7"><path d="M1 1L6 6L11 1" fill="none" stroke="#555" stroke-width="1"/></svg></div>
      <div class="trow r2">
        <div class="tbtn"><svg viewBox="0 0 61 59"><path d="M15 20V48L21 43L25 52L29 50L25 42L33 42Z" fill="#fff" stroke="#111" stroke-width="1.4"/><polygon points="37,11 49,11 43,21 50,21 29,41 37,26 31,26" fill="#f4ea20" stroke="#99880f" stroke-width=".7"/></svg></div>
        <span class="tl">智能选择</span>
      </div>
      <div class="trow r3">
        <div class="tbtn on"><svg viewBox="0 0 61 59"><rect x="12" y="14" width="37" height="31" fill="none" stroke="#1a2fa0" stroke-width="1.5" stroke-dasharray="2 2"/></svg></div>
        <span class="tl">矩形围栏</span>
      </div>
      <div class="trow r4">
        <div class="tbtn"><svg viewBox="0 0 61 59"><path d="M6.7 10L28 18L43 10L46 33L54 36L44 50L31 45L14 49L9 37Z" fill="#b4b4b4"/><path d="M7.7 11.7L28 23L41 13L38 32L28 37L18 45L9.3 27Z" fill="#c4d0d8" stroke="#6ab4da" stroke-width="1.8"/><path d="M12.7 18L28 28L34 27L24 30L16 27Z" fill="#fff"/><circle cx="42.7" cy="36" r="7.5" fill="#9a9a9a" fill-opacity=".55" stroke="#333" stroke-width="1.8"/><path d="M31 36H54M42.7 25V47" stroke="#333" stroke-width="1.6"/></svg></div>
        <span class="tl">多边形/套索围栏</span>
      </div>
      <div class="trow r5">
        <div class="tbtn dim"><svg viewBox="0 0 61 59"><path d="M13 30L26 19V24H47V36H26V42Z" fill="#e0e0e0" stroke="#9a9a9a" stroke-width="1.5"/></svg></div>
        <span class="tl">向后 [b]</span>
      </div>
      <div class="trow r6">
        <div class="tbtn dim"><svg viewBox="0 0 61 59"><path d="M48 30L35 19V24H14V36H35V42Z" fill="#e0e0e0" stroke="#9a9a9a" stroke-width="1.5"/></svg></div>
        <span class="tl">向前 [n]</span>
      </div>
      <div class="actions">
        <div class="abtn ac"><svg viewBox="0 0 24 28"><rect width="24" height="28" fill="#c8c8c8"/><path d="M5 15L10 21L19 8" fill="none" stroke="#eee" stroke-width="2"/></svg><span>接受</span></div>
        <div class="abtn cn"><svg viewBox="0 0 24 28"><rect width="24" height="28" fill="#b8b8b8"/><path d="M5 7L19 21M19 7L5 21" stroke="#eee" stroke-width="3"/></svg><span>取消选择</span></div>
      </div>
    </section>
  </main>
</div>
</body>
</html>
```

FILE: styles.css
```css
* { box-sizing: border-box; }
html, body { margin: 0; padding: 0; background: #fff; }
body { font-family: "Noto Sans CJK SC", "Noto Sans", sans-serif; color: #000; }
.defs { position: absolute; }
svg { display: block; flex: none; }
.app { width: 2214px; height: 1344px; overflow: hidden; display: flex; flex-direction: column; position: relative; }

/* title bar */
.titlebar { height: 112px; flex: none; border-bottom: 2px solid #d8d8d8; background: linear-gradient(to right, #6f99c3 0%, #6c99c2 60%, #5f9bbb 100%); color: #fff; display: flex; flex-direction: column; }
.qat { height: 60px; display: flex; align-items: center; }
.apptitle { margin-left: 453px; margin-top: -3px; font-size: 26px; letter-spacing: .4px; line-height: 30px; white-space: nowrap; }
.qsep { width: 5px; height: 51px; border-left: 2px solid #f0f4f8; border-right: 2px solid #f0f4f8; flex: none; }
.q-logo { width: 47px; height: 47px; margin-left: 10px; margin-top: -6px; }
.q-new { width: 23px; height: 28px; margin-left: 55px; }
.q-dd1 { margin-left: 20px; }
.q-s1 { margin-left: 10px; }
.q-open { width: 32px; height: 31px; margin-left: 11px; }
.q-pin { width: 30px; height: 29px; margin-left: 16px; }
.q-s2 { margin-left: 12px; }
.q-save { width: 27px; height: 28px; margin-left: 13px; }
.q-saveas { width: 30px; height: 32px; margin-left: 18px; }
.q-dd2 { margin-left: 17px; }
.q-s3 { margin-left: 9px; }
.q-gear { width: 30px; height: 30px; margin-left: 12px; }
.q-s4 { margin-left: 12px; }
.q-door { width: 28px; height: 32px; margin-left: 12px; }
.q-s5 { margin-left: 14px; }
.q-undo { width: 26px; height: 29px; margin-left: 13px; }
.q-dd3 { margin-left: 18px; }
.q-redo { width: 26px; height: 29px; margin-left: 15px; }
.q-dd4 { margin-left: 19px; }
.q-undoall { width: 32px; height: 30px; margin-left: 61px; }
.q-s6 { margin-left: 11px; }
.q-cursor { width: 20px; height: 24px; margin-left: 19px; }
.q-ddbar { width: 18px; height: 14px; margin-left: 16px; }
.q-t { width: 31px; height: 32px; margin-left: 12px; }

.tabs { height: 50px; display: flex; align-items: center; padding-left: 13px; font-size: 25px; }
.tab { height: 50px; line-height: 50px; white-space: nowrap; }
.t-file { width: 83px; letter-spacing: .5px; }
.t-home { margin-left: 30px; width: 108px; text-align: center; color: #ffc84a; border-bottom: 3px solid #ffc84a; }
.t-meas { margin-left: 30px; width: 129px; letter-spacing: .8px; }
.t-view { margin-left: 60px; width: 50px; }
.t-tool { margin-left: 60px; width: 50px; }
.search { margin-left: auto; width: 160px; height: 46px; background: #fff; border: 1px solid #dfe6ee; border-right: 0; color: #000; font-size: 24px; line-height: 46px; padding-left: 7px; }

/* dropdown arrows */
.dd { display: block; width: 13px; height: 6px; flex: none; background: #000; clip-path: polygon(0 0, 100% 0, 50% 100%); }
.dd.w { background: #fff; }

/* ribbon */
.ribbon { height: 191px; flex: none; border-bottom: 2px solid #d9d9d9; padding-top: 12px; display: flex; align-items: flex-start; background: #fff; }
.grp { height: 163px; flex: none; border-right: 2px solid #e2e2e2; display: flex; flex-direction: column; }
.g-draw { width: 872px; }
.g-dim { width: 400px; }
.g-rel { width: 270px; }
.g-w109 { width: 109px; }
.g-w88 { width: 88px; }
.g-w89 { width: 89px; }
.g-w108 { width: 108px; }
.g-close { width: 132px; border-right: 0; }
.body { height: 141px; margin-top: -4px; display: flex; flex: none; }
.glabel { height: 26px; line-height: 24px; font-size: 24px; text-align: center; white-space: nowrap; padding-left: 3px; }
.big { display: flex; flex-direction: column; align-items: center; flex: none; }
.bi { width: 100px; height: 85px; flex: none; margin-bottom: -1.5px; }
.lbl { height: 30px; line-height: 30px; font-size: 24px; white-space: nowrap; flex: none; }
.big .dd { margin-top: 19.5px; }
.b-line { width: 112px; }
.b-circ { width: 128px; }
.b-rect { width: 138px; margin-left: 10px; }
.b-smart { width: 116px; padding-left: 12px; }
.b-full { width: 100%; }
.b-full .lbl { padding-left: 3px; }
.b-full .lbl-close { padding-left: 0; }

.sg { display: grid; grid-auto-rows: 47px; align-items: center; justify-items: center; flex: none; }
.si { width: 36px; height: 36px; overflow: visible; }
.sg-a { width: 218px; grid-template-columns: 36px 37px 32px 44px 30px 38px; border-right: 1px solid #e0e0e0; }
.sg-b { width: 155px; padding-left: 8px; padding-right: 5px; grid-template-columns: repeat(3, 47px); border-right: 1px solid #e0e0e0; }
.sg-c { padding-left: 4px; grid-template-columns: repeat(2, 47px); }
.sg-d { margin-left: 0; width: 219px; padding-right: 4px; grid-template-columns: 47px 27px 46px 47px 48px; border-right: 1px solid #e0e0e0; }
.sg-e { width: 62px; grid-template-columns: 62px; }
.sg-f { width: 205px; padding-left: 10px; padding-right: 6px; grid-template-columns: repeat(4, 47px); border-right: 1px solid #e0e0e0; }
.sg-g { padding-left: 8px; grid-template-columns: 47px; }
.act { width: 47px; height: 46px; background: #cce4ee; border: 1px solid #bcd6e8; display: flex; align-items: center; justify-content: center; }

/* icon strokes */
.ln { fill: none; stroke: #4b97b8; stroke-width: 1.2; }
.dk { fill: none; stroke: #444; stroke-width: 1.2; }
.lb { font: 10px "Liberation Sans", sans-serif; fill: #4b97b8; }
.lbg { fill: #ccc; }
.dis { opacity: .95; }
.xy { font: bold 20px "Liberation Sans", sans-serif; fill: #3a93b4; }
.ta1 { font: bold 14px "Liberation Sans", sans-serif; fill: #5e95b8; }
.ta2 { font: italic bold 31px "Liberation Serif", serif; fill: #5e95b8; }
.ta3 { font: 26px "Liberation Sans", sans-serif; fill: #dfdfdf; }
.ta4 { font: 16px "Liberation Sans", sans-serif; fill: #dfdfdf; }
.seven { font: bold 11px "Liberation Sans", sans-serif; fill: #d01010; }
.aa { font: bold 12px "Liberation Mono", monospace; fill: #1d2d50; }
.t3d { font: bold 21px "Liberation Sans", sans-serif; fill: #fff; }

/* work area */
.work { flex: 1; min-height: 0; display: grid; grid-template-columns: 57px 431px 1fr; grid-template-rows: 45px 82px 1fr; position: relative; }
.strip { grid-column: 1; grid-row: 1 / 3; background: #f7f8f9; border-left: 2px solid #2f5fa5; margin-top: 8px; padding: 7px 0 0 2px; overflow: hidden; }
.logo3d { width: 40px; height: 40px; }
.vtext { writing-mode: vertical-rl; text-orientation: sideways; font-size: 24px; line-height: 24px; margin: 4px 0 0 11px; color: #333; white-space: nowrap; }
.tabbar { grid-column: 2 / 4; grid-row: 1; background: #fff; border-bottom: 1px solid #8fb2d0; padding-top: 2px; }
.doctab { width: 262px; height: 42px; background: #6f99c3; color: #fff; border-left: 2px solid #b9c6d2; display: flex; align-items: center; padding-left: 21px; padding-bottom: 2px; font-size: 24px; letter-spacing: -.1px; white-space: nowrap; }
.docic { width: 15px; height: 15px; margin-right: 4px; }
.blank { grid-column: 2; grid-row: 2; background: #fff; }

.canvas { grid-column: 3; grid-row: 2 / 4; position: relative; background: linear-gradient(to right, rgba(255,255,255,.38), rgba(255,255,255,0) 60%), linear-gradient(160deg, #fff 0%, #cfd6ea 55%, #fcfdfe 100%); overflow: hidden; }
.draw { width: 1726px; height: 996px; }
.wm text { font-size: 42px; fill: rgba(70, 70, 70, .07); font-family: "Noto Sans CJK SC", sans-serif; font-weight: 300; }
.mk { fill: none; stroke: #f0145a; stroke-width: 1.6; }
.pl { fill: none; stroke: #f5205c; stroke-width: 3; }
.ten { font-family: "Liberation Serif", serif; font-size: 80px; fill: #f5205c; }
.ax { font: 19px "Liberation Sans", sans-serif; }
.az { fill: #1414e0; }
.ay { fill: #e81818; }
.okbtn { position: absolute; left: 146px; top: 12px; width: 52px; height: 52px; padding: 0; border: 1px solid #1f7a22; background: #2f9b2d; }

.tree { grid-column: 1 / 3; grid-row: 3; background: #fff; border-top: 1px solid #ccc; border-right: 1px solid #cfd3da; overflow: hidden; font-size: 24px; }
.treehead { height: 38px; margin-bottom: 8px; display: flex; align-items: center; font-size: 25px; white-space: nowrap; }
.thic { width: 38px; height: 37px; margin-right: 4px; }
.tr { height: 38px; display: flex; align-items: center; white-space: nowrap; }
.lv1 { padding-left: 62px; position: relative; }
.lv2 { padding-left: 108px; }
.lv3 { padding-left: 147px; }
.tri { display: block; width: 0; height: 0; flex: none; }
.tri.dn { border-left: 11px solid transparent; border-right: 11px solid transparent; border-top: 14px solid #444; }
.t0 { margin-right: 8px; }
.tr.lv1 .tri { position: absolute; }
.tr.lv1 .t1 { left: 26px; }
.tri.rt { left: 32px; border-top: 11px solid transparent; border-bottom: 11px solid transparent; border-left: 14px solid #444; }
.eye { width: 26px; height: 18px; flex: none; overflow: visible; display: block; }
.ob { height: 20px; }
.tic { flex: none; }
.tic1 { width: 24px; height: 24px; margin-left: 0; }
.tic2 { width: 26px; height: 24px; margin-left: 12px; }
.t-shou { margin-left: 12px; }
.tic3 { width: 30px; height: 32px; margin-left: 10px; }
.tic4 { width: 26px; height: 26px; margin-left: 15px; }
.tic5 { width: 24px; height: 26px; margin-left: 12px; }
.tic6 { width: 26px; height: 26px; }
.tic7 { width: 32px; height: 28px; margin-left: 11px; }
.txt { margin-left: 13px; }
.gr { color: #666; }
.gd { color: #666; margin-left: 11px; }
.hl { background: #fdc67b; border: 1px solid #f4b865; height: 27px; line-height: 24px; padding: 0 8px 0 5px; font-size: 24px; }

/* floating dialog */
.dialog { position: absolute; left: 151px; top: 45px; width: 449px; height: 615px; background: #fff; border: 1px solid #cdd1da; display: flex; flex-direction: column; padding: 0 9px 0 19px; }
.dhead { height: 69px; flex: none; display: flex; align-items: flex-start; position: relative; margin-left: -8px; }
.dtitle { font-size: 25px; line-height: 30px; margin-top: 5px; margin-left: -1px; }
.qm { width: 30px; height: 30px; margin-left: auto; margin-top: 4px; margin-right: 9px; }
.cx { width: 18px; height: 16px; margin-top: 12px; margin-right: 7px; }
.qmt { font: 22px "Liberation Sans", sans-serif; fill: #3a6f90; }
.trow { display: flex; align-items: center; flex: none; }
.tbtn { width: 63px; height: 61px; flex: none; background: #fff; border: 1px solid #d7d7d7; border-radius: 4px; box-shadow: 0 0 0 1px #f0f0f0; padding: 0; }
.tbtn svg { width: 61px; height: 59px; }
.tbtn.on { background: #cfe3f7; border-color: #1f66a5; box-shadow: none; }
.tbtn.dim { background: #f8f8f8; border-color: #ededed; }
.tl { margin-left: 55px; font-size: 24px; line-height: 30px; white-space: nowrap; }
.r1 .tl { padding-top: 2px; }
.r2 { margin-top: 11px; }
.r3 { margin-top: 12px; }
.r4 { margin-top: 3px; }
.r5 { margin-top: 10px; }
.r6 { margin-top: 2px; }
.combo { margin-top: 12px; width: 368px; height: 35px; flex: none; border: 1px solid #c4c4c4; background: #fdfdfd; display: flex; align-items: center; padding: 0 10px 3px 4px; font-size: 24px; line-height: 30px; }
.chev { width: 12px; height: 7px; margin-left: auto; margin-top: 3px; }
.actions { display: flex; margin-top: 11px; justify-content: flex-end; gap: 4px; flex: none; }
.abtn { height: 43px; background: #f8f8f8; border: 1px solid #eee; border-radius: 3px; display: flex; align-items: center; padding-left: 5px; padding-bottom: 2px; color: #8a8a8a; font-size: 24px; white-space: nowrap; }
.abtn svg { width: 24px; height: 28px; margin-right: 12px; margin-top: 2px; }
.ac { width: 99px; }
.cn { width: 148px; }
```
